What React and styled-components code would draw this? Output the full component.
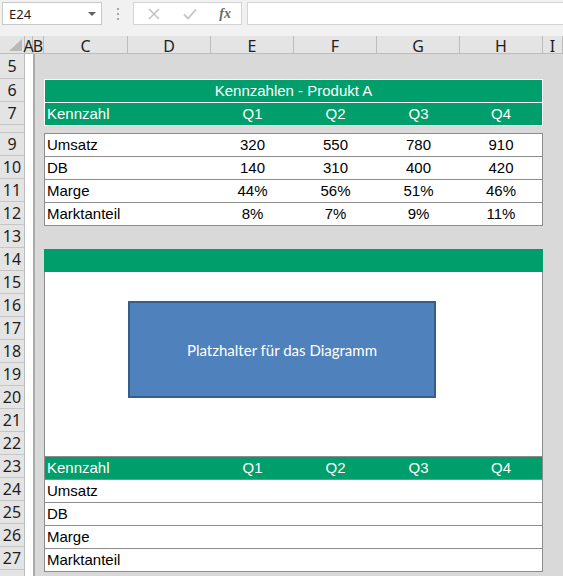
import React from "react";
import styled, { createGlobalStyle } from "styled-components";

const GREEN = "#009e6a";
const LINE = "#8c8c8c";

const columns = [
  { name: "A", w: 8 },
  { name: "B", w: 11 },
  { name: "C", w: 84 },
  { name: "D", w: 83 },
  { name: "E", w: 83 },
  { name: "F", w: 83 },
  { name: "G", w: 83 },
  { name: "H", w: 83 },
  { name: "I", w: 20 },
];

// row 8 is squeezed almost shut, row 28 only peeks in at the bottom
const rows = [
  { n: 5, h: 25 },
  { n: 6, h: 23 },
  { n: 7, h: 23 },
  { n: 8, h: 8 },
  ...Array.from({ length: 19 }, (_, i) => ({ n: i + 9, h: 23 })),
  { n: 28, h: 23, hidden: true },
];

const data = [
  ["Umsatz", "320", "550", "780", "910"],
  ["DB", "140", "310", "400", "420"],
  ["Marge", "44%", "56%", "51%", "46%"],
  ["Marktanteil", "8%", "7%", "9%", "11%"],
];

const quarters = ["Q1", "Q2", "Q3", "Q4"];

export default function App() {
  return (
    <>
      <GlobalStyle />
      <Window>
        <FormulaBar>
          <NameBox>
            E24
            <Caret />
          </NameBox>
          <Grip>
            <i />
            <i />
            <i />
          </Grip>
          <FxBox>
            <svg width="12" height="12" viewBox="0 0 12 12">
              <path d="M1 1L11 11M11 1L1 11" stroke="#c4c4c4" strokeWidth="1.6" fill="none" />
            </svg>
            <svg width="14" height="12" viewBox="0 0 14 12">
              <path d="M1 6.5L5 10.5L13 1.5" stroke="#c4c4c4" strokeWidth="1.8" fill="none" />
            </svg>
            <Fx>fx</Fx>
          </FxBox>
          <FormulaInput />
        </FormulaBar>

        <HeaderRow>
          <Corner>
            <svg width="16" height="14" viewBox="0 0 16 14">
              <polygon points="15,1 15,13 2,13" fill="#b9b9b9" />
            </svg>
          </Corner>
          {columns.map((c) => (
            <ColHead key={c.name} $w={c.w}>
              {c.name}
            </ColHead>
          ))}
        </HeaderRow>

        <Body>
          <RowHeads>
            {rows.map((r) => (
              <RowHead key={r.n} $h={r.h}>
                {r.h > 10 && !r.hidden ? r.n : ""}
              </RowHead>
            ))}
          </RowHeads>
          <ColA />
          <Main>
            <HeadTable>
              <Title>Kennzahlen - Produkt A</Title>
              <GreenRow>
                <Cell>Kennzahl</Cell>
                <Cell />
                {quarters.map((q) => (
                  <Cell key={q} $center>
                    {q}
                  </Cell>
                ))}
              </GreenRow>
            </HeadTable>

            <DataTable>
              {data.map((r) => (
                <DataRow key={r[0]}>
                  <Cell>{r[0]}</Cell>
                  <Cell />
                  {r.slice(1).map((v, i) => (
                    <Cell key={i} $center>
                      {v}
                    </Cell>
                  ))}
                </DataRow>
              ))}
            </DataTable>

            <ChartBlock>
              <ChartBand />
              <ChartArea>
                <Placeholder>Platzhalter für das Diagramm</Placeholder>
              </ChartArea>
              <GreenRow $lined>
                <Cell>Kennzahl</Cell>
                <Cell />
                {quarters.map((q) => (
                  <Cell key={q} $center>
                    {q}
                  </Cell>
                ))}
              </GreenRow>
              {data.map((r) => (
                <DataRow key={r[0]} $lined>
                  <Cell>{r[0]}</Cell>
                </DataRow>
              ))}
            </ChartBlock>
          </Main>
        </Body>
      </Window>
    </>
  );
}

const GlobalStyle = createGlobalStyle`
  html, body {
    margin: 0;
    padding: 0;
  }
  body {
    width: 563px;
    height: 576px;
    overflow: hidden;
    background: #d9d9d9;
    font-family: "Liberation Sans", Arial, sans-serif;
  }
`;

const Window = styled.div`
  width: 563px;
  height: 576px;
  overflow: hidden;
  display: flex;
  flex-direction: column;
`;

const FormulaBar = styled.div`
  height: 36px;
  flex: none;
  box-sizing: border-box;
  padding: 2px 0 0 2px;
  background: #f1f1f1;
  display: flex;
  align-items: flex-start;
`;

const NameBox = styled.div`
  width: 100px;
  height: 23px;
  box-sizing: border-box;
  border: 1px solid #c8c8c8;
  background: #fff;
  display: flex;
  align-items: center;
  justify-content: space-between;
  padding: 0 5px 0 6px;
  font-family: "Noto Sans", sans-serif;
  font-size: 13px;
  color: #222;
`;

const Caret = styled.span`
  width: 0;
  height: 0;
  border-left: 4px solid transparent;
  border-right: 4px solid transparent;
  border-top: 4px solid #606060;
`;

const Grip = styled.div`
  width: 31px;
  height: 23px;
  display: flex;
  flex-direction: column;
  align-items: center;
  justify-content: center;
  gap: 3px;

  i {
    display: block;
    width: 2px;
    height: 2px;
    background: #a8a8a8;
  }
`;

const FxBox = styled.div`
  width: 109px;
  height: 23px;
  box-sizing: border-box;
  border: 1px solid #d4d4d4;
  background: #fff;
  display: flex;
  align-items: center;
  justify-content: space-between;
  padding: 0 10px 0 14px;
`;

const Fx = styled.span`
  font-family: "Liberation Serif", serif;
  font-style: italic;
  font-weight: bold;
  font-size: 14px;
  color: #6a6a6a;
`;

const FormulaInput = styled.div`
  flex: 1;
  height: 23px;
  margin-left: 5px;
  box-sizing: border-box;
  border: 1px solid #d4d4d4;
  border-right: none;
  background: #fff;
`;

const HeaderRow = styled.div`
  height: 17px;
  flex: none;
  display: flex;
  background: #e4e4e4;
  border-bottom: 1px solid #bdbdbd;
`;

const Corner = styled.div`
  width: 25px;
  flex: none;
  box-sizing: border-box;
  border-right: 1px solid #bdbdbd;
  display: flex;
  align-items: flex-end;
  justify-content: flex-end;
  padding: 0 1px 1px 0;
`;

const ColHead = styled.div`
  width: ${(p) => p.$w}px;
  flex: none;
  box-sizing: border-box;
  border-right: 1px solid #bdbdbd;
  display: flex;
  justify-content: center;
  padding-top: 2px;
  overflow: visible;
  font-family: "Noto Sans", sans-serif;
  font-size: 16px;
  line-height: 16px;
  color: #1e1e1e;
`;

const Body = styled.div`
  flex: 1;
  display: flex;
  min-height: 0;
`;

const RowHeads = styled.div`
  width: 25px;
  flex: none;
  background: #e4e4e4;
  border-right: 1px solid #bdbdbd;
  box-sizing: border-box;
`;

const RowHead = styled.div`
  height: ${(p) => p.$h}px;
  box-sizing: border-box;
  border-bottom: 1px solid #c6c6c6;
  display: flex;
  align-items: center;
  justify-content: center;
  overflow: hidden;
  font-family: "Noto Sans", sans-serif;
  font-size: 16px;
  color: #1e1e1e;
`;

const ColA = styled.div`
  width: 8px;
  flex: none;
  background: #fff;
`;

const Main = styled.div`
  flex: 1;
  background: #d9d9d9;
  border-left: 2px solid #a9a9a9;
  padding: 25px 0 0 9px;
`;

const tableBase = `
  width: 499px;
  box-sizing: border-box;
  font-size: 15px;
`;

const HeadTable = styled.div`
  ${tableBase}
  background: ${GREEN};
  border: 1px solid #fff;
  color: #fff;
  margin-bottom: 7px;
`;

const Title = styled.div`
  height: 22px;
  line-height: 22px;
  text-align: center;
  border-bottom: 1px solid #fff;
`;

const cols = "grid-template-columns: 83px 83px 83px 83px 83px 1fr;";

const GreenRow = styled.div`
  display: grid;
  ${cols}
  height: 22px;
  background: ${GREEN};
  color: #fff;
  border-top: ${(p) => (p.$lined ? `1px solid ${LINE}` : "none")};
`;

const Cell = styled.div`
  line-height: 22px;
  padding: 0 2px;
  white-space: nowrap;
  text-align: ${(p) => (p.$center ? "center" : "left")};
`;

const DataTable = styled.div`
  ${tableBase}
  background: #fff;
  border: 1px solid ${LINE};
  color: #000;
  margin-bottom: 23px;
`;

const DataRow = styled.div`
  display: grid;
  ${cols}
  height: 22px;
  background: #fff;
  color: #000;

  & + & {
    border-top: 1px solid ${LINE};
  }
  ${(p) => (p.$lined ? `border-top: 1px solid ${LINE};` : "")}
`;

const ChartBlock = styled.div`
  ${tableBase}
  border: 1px solid ${LINE};
  border-top: none;
  background: #fff;
`;

const ChartBand = styled.div`
  height: 23px;
  margin: 0 -1px;
  background: ${GREEN};
`;

const ChartArea = styled.div`
  height: 184px;
  box-sizing: border-box;
  padding: 29px 0 0 83px;
  background: #fff;
`;

const Placeholder = styled.div`
  width: 308px;
  height: 97px;
  box-sizing: border-box;
  background: #4f81bd;
  border: 2px solid #385d8a;
  display: flex;
  align-items: center;
  justify-content: center;
  font-family: Lato, "Open Sans", sans-serif;
  font-size: 15px;
  color: #fff;
`;
